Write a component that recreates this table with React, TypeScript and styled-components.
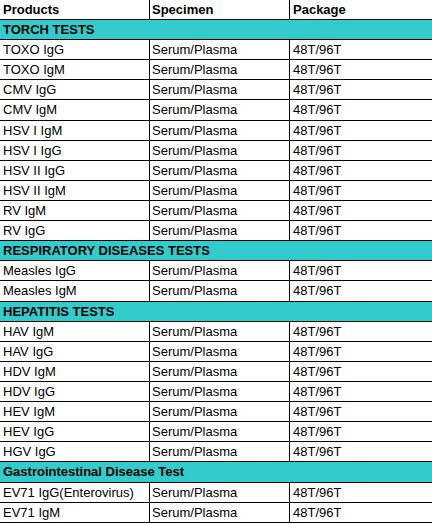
import React from "react";
import styled, { createGlobalStyle } from "styled-components";

const Global = createGlobalStyle`
  html, body { margin: 0; padding: 0; background: #ffffff; }
  body { font-family: "Liberation Sans", Arial, sans-serif; color: #000; }
`;

const Table = styled.div`
  width: 432px;
  display: flex;
  flex-direction: column;
  font-size: 13px;
`;

const Row = styled.div<{ $head?: boolean }>`
  display: grid;
  grid-template-columns: 150px 140px 1fr;
  box-sizing: border-box;
  height: ${(p) => (p.$head ? "20px" : "20.12px")};
  border-bottom: 1px solid #000;
  font-weight: ${(p) => (p.$head ? 700 : 400)};
`;

const Cell = styled.div<{ $last?: boolean }>`
  display: flex;
  align-items: center;
  padding-left: ${(p) => (p.$last ? "3px" : "2px")};
  border-right: ${(p) => (p.$last ? "none" : "1px solid #000")};
  white-space: nowrap;
  overflow: hidden;
  &:first-child { padding-left: 3px; }
`;

const Section = styled.div`
  display: flex;
  align-items: center;
  box-sizing: border-box;
  height: 20.12px;
  padding-left: 3px;
  background: #33cccc;
  border-bottom: 1px solid #000;
  font-weight: 700;
  white-space: nowrap;
`;

type Group = { title: string; items: string[] };

const groups: Group[] = [
  {
    title: "TORCH TESTS",
    items: [
      "TOXO IgG",
      "TOXO IgM",
      "CMV IgG",
      "CMV IgM",
      "HSV I IgM",
      "HSV I IgG",
      "HSV II IgG",
      "HSV II IgM",
      "RV IgM",
      "RV IgG",
    ],
  },
  { title: "RESPIRATORY DISEASES TESTS", items: ["Measles IgG", "Measles IgM"] },
  {
    title: "HEPATITIS TESTS",
    items: ["HAV IgM", "HAV IgG", "HDV IgM", "HDV IgG", "HEV IgM", "HEV IgG", "HGV IgG"],
  },
  { title: "Gastrointestinal Disease Test", items: ["EV71 IgG(Enterovirus)", "EV71 IgM"] },
];

export default function App() {
  return (
    <>
      <Global />
      <Table>
        <Row $head>
          <Cell>Products</Cell>
          <Cell>Specimen</Cell>
          <Cell $last>Package</Cell>
        </Row>
        {groups.map((g) => (
          <React.Fragment key={g.title}>
            <Section>{g.title}</Section>
            {g.items.map((it) => (
              <Row key={it}>
                <Cell>{it}</Cell>
                <Cell>Serum/Plasma</Cell>
                <Cell $last>48T/96T</Cell>
              </Row>
            ))}
          </React.Fragment>
        ))}
      </Table>
    </>
  );
}
